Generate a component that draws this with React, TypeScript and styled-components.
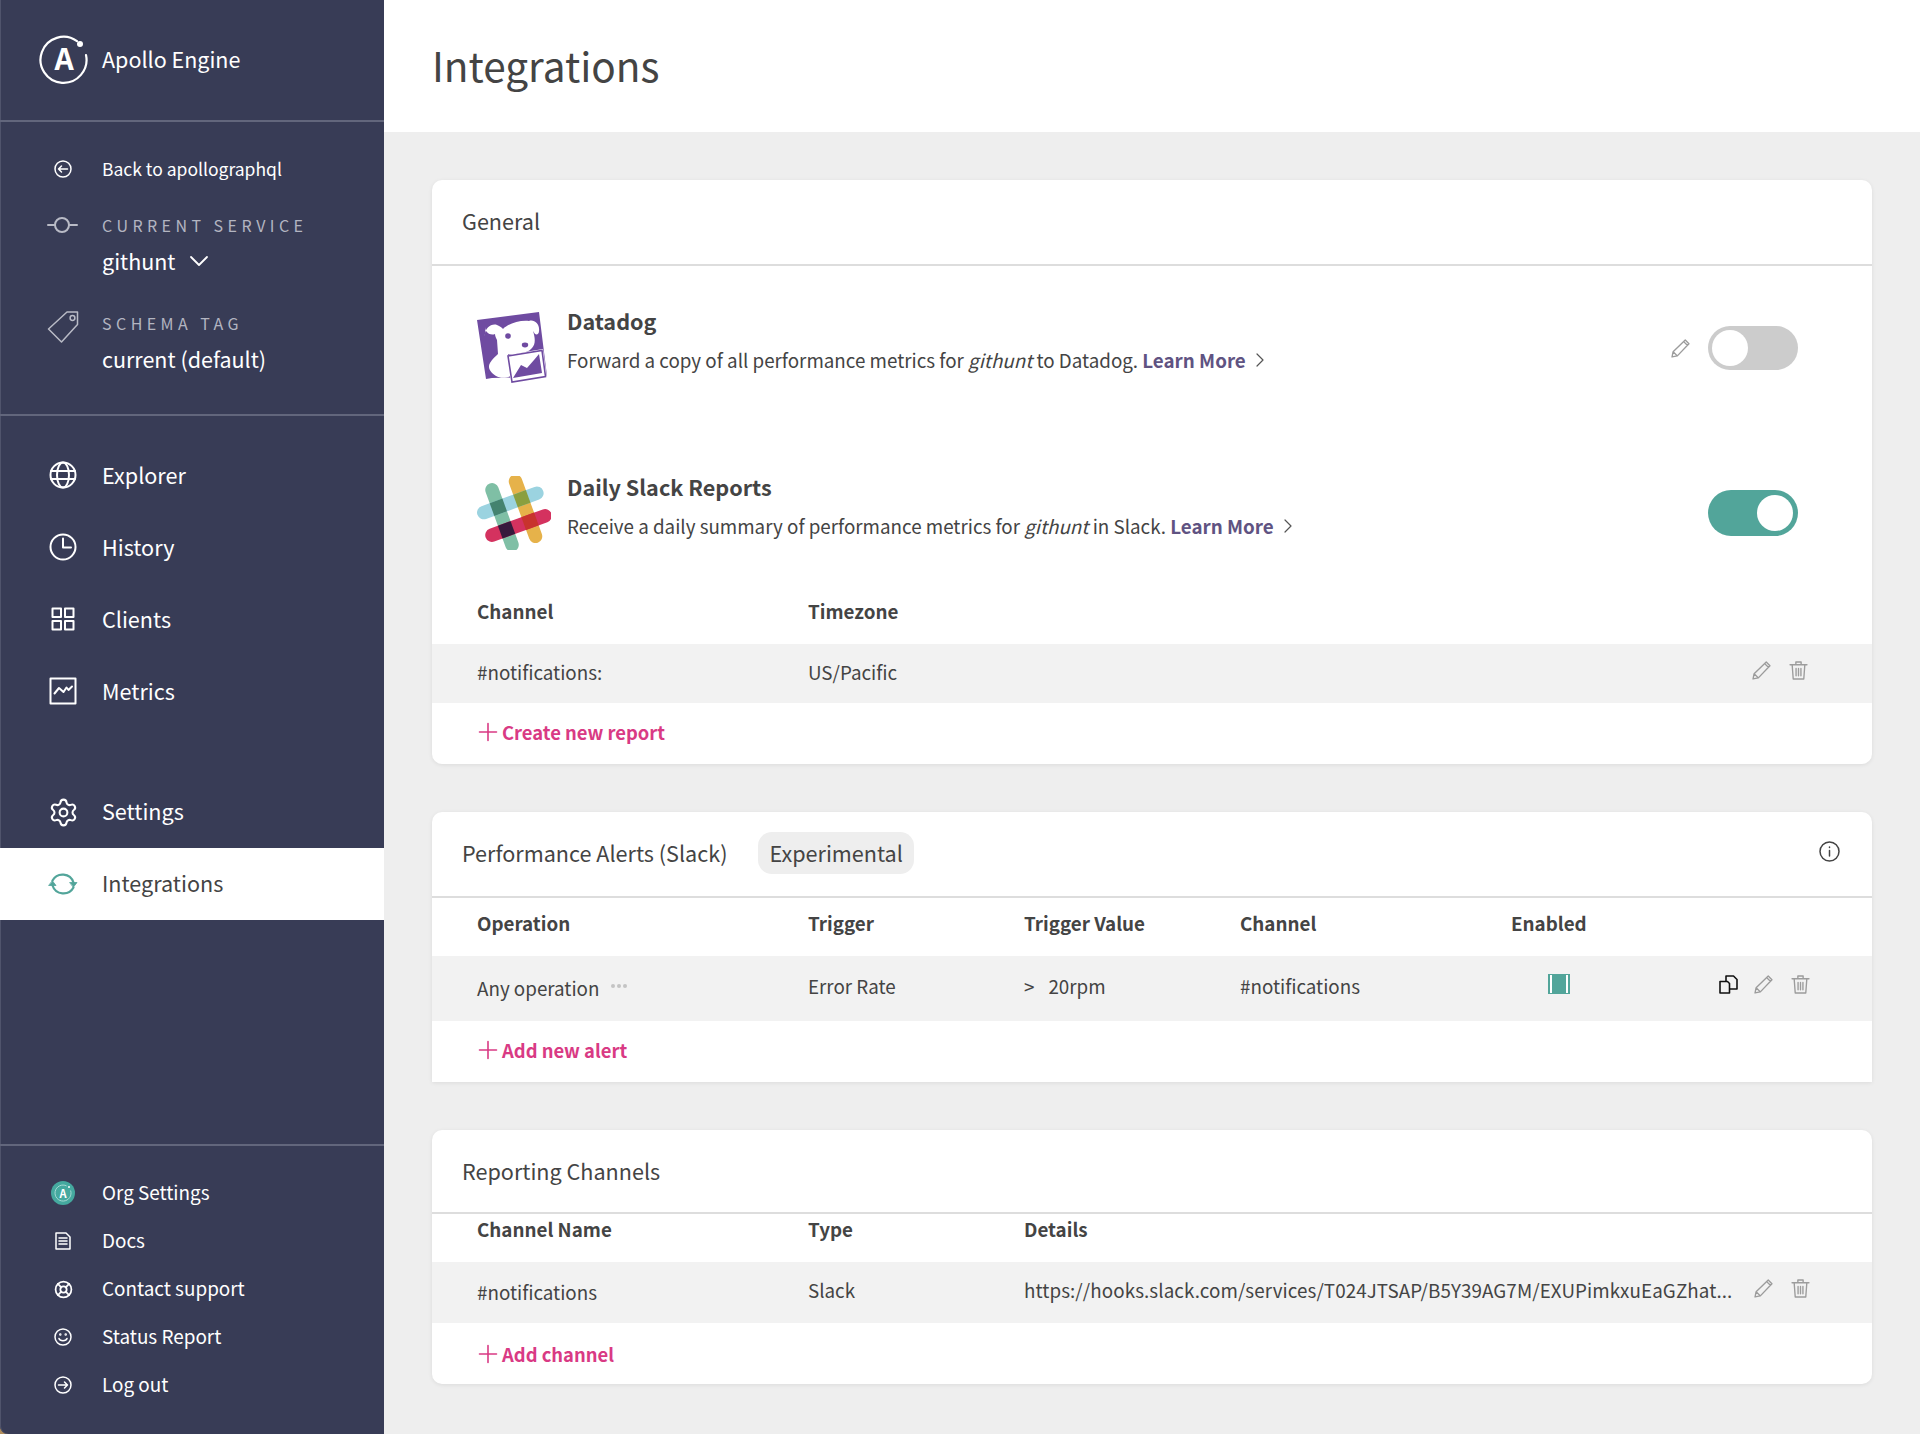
import React from 'react'
import styled, { createGlobalStyle } from 'styled-components'
import { LifeBuoy, Settings } from 'lucide-react'

const sans = `"Noto Sans CJK SC", "Noto Sans", "Liberation Sans", sans-serif`

const GlobalStyle = createGlobalStyle`
  html, body {
    margin: 0;
    padding: 0;
    background: #eeeeee;
    font-family: ${sans};
    color: #444444;
  }
  * { box-sizing: border-box; }
`

const Page = styled.div`
  display: flex;
  width: 1920px;
  height: 1434px;
  overflow: hidden;
  background: #b08d5c;
`

const Sidebar = styled.aside`
  display: flex;
  flex-direction: column;
  width: 384px;
  flex: none;
  background: #383c56;
  color: #ffffff;
  border-radius: 0 0 0 8px;
  box-shadow: inset 1px 0 0 #50546c;
`

const Brand = styled.div`
  display: flex;
  align-items: center;
  height: 122px;
  padding-left: 39px;
  gap: 13px;
  border-bottom: 2px solid #62667c;
  font-size: 21.5px;
  line-height: 28px;
`

const RowText = styled.span`
  margin-top: -2px;
`

const ServiceBlock = styled.div`
  display: flex;
  flex-direction: column;
  padding: 23px 0 40px;
  border-bottom: 2px solid #62667c;
`

const IconSlot = styled.span`
  display: flex;
  align-items: center;
  justify-content: center;
  width: 38px;
  flex: none;
`

const SmallRow = styled.div<{ $size?: number }>`
  display: flex;
  align-items: center;
  height: 48px;
  padding-left: 44px;
  gap: 20px;
  font-size: ${(p) => p.$size ?? 18.9}px;
  line-height: 26px;
`

const ServiceRow = styled.div<{ $top: number }>`
  display: flex;
  align-items: flex-start;
  padding-left: 44px;
  gap: 20px;
  margin-top: ${(p) => p.$top}px;
`

const ServiceText = styled.div`
  display: flex;
  flex-direction: column;
  gap: 9px;
`

const ServiceLabel = styled.div`
  font-size: 16px;
  line-height: 24px;
  letter-spacing: 4.45px;
  color: #b3b5c1;
`

const ServiceValue = styled.div`
  display: flex;
  align-items: center;
  gap: 14px;
  font-size: 21.5px;
  line-height: 30px;
`

const NavGroup = styled.nav<{ $top: number }>`
  display: flex;
  flex-direction: column;
  margin-top: ${(p) => p.$top}px;
`

const NavRow = styled.div<{ $active?: boolean }>`
  display: flex;
  align-items: center;
  height: 72px;
  padding-left: 44px;
  gap: 20px;
  font-size: 21.6px;
  line-height: 30px;
  background: ${(p) => (p.$active ? '#ffffff' : 'transparent')};
  color: ${(p) => (p.$active ? '#444444' : '#ffffff')};
`

const BottomGroup = styled.div`
  display: flex;
  flex-direction: column;
  margin-top: auto;
  padding: 23px 0 25px;
  border-top: 2px solid #62667c;
`

const Main = styled.main`
  display: flex;
  flex-direction: column;
  flex: 1;
  min-width: 0;
  background: #eeeeee;
`

const TopBar = styled.header`
  display: flex;
  align-items: center;
  flex: none;
  height: 132px;
  padding-left: 48px;
  background: #ffffff;
`

const Title = styled.h1`
  margin: -2px 0 0;
  font-size: 40.5px;
  line-height: 52px;
  font-weight: 400;
  color: #444444;
`

const Content = styled.div`
  display: flex;
  flex-direction: column;
  gap: 48px;
  padding: 48px;
`

const Card = styled.section<{ $square?: boolean }>`
  display: flex;
  flex-direction: column;
  flex: none;
  background: #ffffff;
  border-radius: ${(p) => (p.$square ? '10px 10px 0 0' : '10px')};
  box-shadow: 0 1px 4px rgba(0, 0, 0, 0.08);
  overflow: hidden;
`

const CardHead = styled.div<{ $height: number; $lift?: number }>`
  display: flex;
  align-items: center;
  flex: none;
  height: ${(p) => p.$height}px;
  padding: 0 32px ${(p) => p.$lift ?? 0}px 30px;
  border-bottom: 2px solid #dddddd;
  font-size: 21.6px;
  line-height: 30px;
  color: #444444;
`

const Pill = styled.span`
  display: flex;
  align-items: center;
  height: 42px;
  margin-left: 31px;
  padding: 0 11px;
  border-radius: 14px;
  background: #eeeeee;
`

const InfoSlot = styled.span`
  display: flex;
  margin-left: auto;
  margin-top: -4px;
`

const Integration = styled.div<{ $height: number }>`
  display: flex;
  align-items: center;
  flex: none;
  height: ${(p) => p.$height}px;
  padding: 0 74px 0 45px;
`

const LogoSlot = styled.div`
  display: flex;
  align-items: center;
  width: 90px;
  flex: none;
`

const Info = styled.div<{ $lift: number }>`
  display: flex;
  flex-direction: column;
  gap: 11px;
  flex: 1;
  margin-bottom: ${(p) => p.$lift}px;
`

const InfoTitle = styled.div`
  font-size: 21.6px;
  line-height: 28px;
  font-weight: 700;
  color: #444444;
`

const InfoText = styled.div`
  display: flex;
  align-items: center;
  font-size: 18.8px;
  line-height: 28px;
  white-space: pre;
`

const LearnMore = styled.a`
  font-weight: 700;
  color: #5f5382;
  margin-right: 10px;
`

const ToggleWrap = styled.div`
  display: flex;
  align-items: center;
  gap: 18px;
`

const Toggle = styled.div<{ $on?: boolean }>`
  display: flex;
  align-items: center;
  justify-content: ${(p) => (p.$on ? 'flex-end' : 'flex-start')};
  width: 90px;
  height: ${(p) => (p.$on ? 46 : 44)}px;
  padding: 0 ${(p) => (p.$on ? 5 : 4)}px;
  border-radius: 23px;
  background: ${(p) => (p.$on ? '#52a59a' : '#cccccc')};
`

const Knob = styled.span`
  width: 36px;
  height: 36px;
  border-radius: 50%;
  background: #ffffff;
`

const Grid = styled.div<{ $cols: string; $height: number; $shaded?: boolean; $lift?: number }>`
  display: grid;
  flex: none;
  grid-template-columns: ${(p) => p.$cols};
  align-items: center;
  height: ${(p) => p.$height}px;
  padding: 0 62px ${(p) => p.$lift ?? 0}px 45px;
  font-size: 18.8px;
  line-height: 26px;
  background: ${(p) => (p.$shaded ? '#f2f2f2' : 'transparent')};
`

const HeadCell = styled.div`
  font-weight: 700;
  color: #444444;
`

const Cell = styled.div<{ $drop?: number }>`
  display: flex;
  align-items: center;
  white-space: nowrap;
  min-width: 0;
  margin-top: -3px;
  padding-top: ${(p) => p.$drop ?? 0}px;
`

const UrlCell = styled(Cell)`
  letter-spacing: 0.09px;
`

const Dots = styled.span`
  display: flex;
  gap: 2px;
  margin: -5px 0 0 12px;
`

const Dot = styled.i`
  width: 4px;
  height: 4px;
  border-radius: 50%;
  background: #c4c4c4;
`

const Gt = styled.span`
  margin-right: 14px;
`

const Check = styled.div`
  display: flex;
  width: 22px;
  height: 20px;
  margin-left: 37px;
  margin-top: -8px;
  padding: 0 2px;
  border: 1px solid #52a59a;
  border-left-width: 2px;
  border-right-width: 2px;
  background: #ffffff;
`

const CheckFill = styled.span`
  flex: 1;
  background: #52a59a;
`

const Actions = styled.div<{ $nudge?: number }>`
  display: flex;
  align-items: center;
  justify-content: flex-end;
  gap: 18px;
  margin-top: -6px;
  margin-right: ${(p) => p.$nudge ?? 0}px;
`

const AddRow = styled.div<{ $height: number; $lift?: number }>`
  display: flex;
  align-items: center;
  flex: none;
  height: ${(p) => p.$height}px;
  padding: 0 0 ${(p) => p.$lift ?? 0}px 46px;
  gap: 4px;
  font-size: 18.4px;
  line-height: 26px;
  font-weight: 700;
  color: #d93a84;
`

const Stroke = styled.svg`
  display: block;
  flex: none;
  fill: none;
  stroke: currentColor;
  stroke-linecap: round;
  stroke-linejoin: round;
`

const ServiceStroke = styled(Stroke)`
  margin-top: 3px;
`

const Grey = styled.span<{ $color?: string }>`
  display: flex;
  color: ${(p) => p.$color ?? '#9c9c9c'};
`

const CopySlot = styled(Grey)`
  margin-right: -2px;
`

const BadgeText = styled.text`
  font-family: ${sans};
  font-weight: 700;
  text-anchor: middle;
`

const ApolloLogo = () => (
  <svg width="50" height="50" viewBox="0 0 50 50">
    <path d="M47 20A23 23 0 1 1 38 6.200" fill="none" stroke="#fff" strokeWidth="2.200" strokeLinecap="round" />
    <circle cx="41" cy="9" r="3" fill="#fff" />
    <BadgeText x="25" y="35" fontSize="30" fill="#fff">A</BadgeText>
  </svg>
)

const BackIcon = () => (
  <Stroke width="18" height="18" viewBox="0 0 18 18" strokeWidth="1.5">
    <circle cx="9" cy="9" r="8" />
    <path d="M13.5 9h-9M7.5 6 4.5 9l3 3" />
  </Stroke>
)

const ForwardIcon = () => (
  <Stroke width="18" height="18" viewBox="0 0 18 18" strokeWidth="1.5">
    <circle cx="9" cy="9" r="8" />
    <path d="M4.5 9h9M10.500 6l3 3-3 3" />
  </Stroke>
)

const ServiceIcon = () => (
  <ServiceStroke width="32" height="18" viewBox="0 0 32 18" strokeWidth="2" color="#b9bbc6">
    <circle cx="15" cy="9" r="7" />
    <path d="M1 9h7M22 9h8" />
  </ServiceStroke>
)

const TagIcon = () => (
  <Stroke width="32" height="32" viewBox="0 0 32 32" strokeWidth="1.5" color="#b9bbc6">
    <path d="M20 1h10.500v12.500L14.500 31 1.500 18 20 1Z" />
    <circle cx="25.500" cy="7" r="2.400" />
  </Stroke>
)

const Chevron = () => (
  <Stroke width="20" height="12" viewBox="0 0 20 12" strokeWidth="1.8">
    <path d="M2 2l8 8 8-8" />
  </Stroke>
)

const GlobeIcon = () => (
  <Stroke width="28" height="28" viewBox="0 0 28 28" strokeWidth="2">
    <circle cx="14" cy="14" r="12.500" />
    <ellipse cx="14" cy="14" rx="6" ry="12.500" />
    <path d="M2 10h24M2 18h24" />
  </Stroke>
)

const ClockIcon = () => (
  <Stroke width="28" height="28" viewBox="0 0 28 28" strokeWidth="2">
    <circle cx="14" cy="14" r="12.500" />
    <path d="M14 5.500V14.500H22" />
  </Stroke>
)

const ClientsIcon = () => (
  <Stroke width="24" height="24" viewBox="0 0 24 24" strokeWidth="2">
    <rect x="1.500" y="1.500" width="8.500" height="8.500" />
    <rect x="14" y="1.500" width="8.500" height="8.500" />
    <rect x="1.500" y="14" width="8.500" height="8.500" />
    <rect x="14" y="14" width="8.500" height="8.500" />
  </Stroke>
)

const MetricsIcon = () => (
  <Stroke width="28" height="28" viewBox="0 0 28 28" strokeWidth="2">
    <rect x="1.500" y="1.500" width="25" height="25" />
    <path d="M5.500 16.500 10 11l4.500 4 3-4.500 2 2.500 3.500-3.500" />
  </Stroke>
)

const SyncIcon = () => (
  <Stroke width="30" height="26" viewBox="0 0 30 26" strokeWidth="2.200" color="#52a59a">
    <path d="M4.500 9.500A11.500 11.500 0 0 1 25.500 11.500" />
    <path d="M25.500 16.500A11.500 11.500 0 0 1 4.500 14.500" />
    <path d="M22 11.500h7L25.500 16ZM1 14.500h7L4.500 10Z" fill="currentColor" strokeWidth="0.8" />
  </Stroke>
)

const OrgBadge = () => (
  <svg width="24" height="24" viewBox="0 0 24 24">
    <circle cx="12" cy="12" r="12" fill="#45a99f" />
    <path d="M19.600 9.500A8 8 0 1 1 15.600 4.900" fill="none" stroke="#a7dad4" strokeWidth="1" />
    <circle cx="18" cy="6" r="1" fill="#fff" />
    <BadgeText x="12" y="16.500" fontSize="11" fill="#fff">A</BadgeText>
  </svg>
)

const DocIcon = () => (
  <Stroke width="16" height="18" viewBox="0 0 16 18" strokeWidth="1.5">
    <path d="M1 1h10l4 4v12H1V1Z" />
    <path d="M4 6h8M4 9h8M4 12h8" />
  </Stroke>
)

const SmileIcon = () => (
  <Stroke width="18" height="18" viewBox="0 0 18 18" strokeWidth="1.5">
    <circle cx="9" cy="9" r="8" />
    <path d="M5 10.500c1 3 7 3 8 0" />
    <circle cx="6.300" cy="6.600" r="0.500" />
    <circle cx="11.700" cy="6.600" r="0.500" />
  </Stroke>
)

const PencilIcon = () => (
  <Stroke width="19" height="19" viewBox="0 0 18 18" strokeWidth="1.300">
    <path d="M1 17l1-5L13.500 1 17 4.500 6 16l-5 1ZM2 12l4 4M12 2.500 15.500 6" />
  </Stroke>
)

const TrashIcon = () => (
  <Stroke width="19" height="19" viewBox="0 0 18 18" strokeWidth="1.300">
    <path d="M1 3.500h16M3 3.500 4 17h10l1-13.500M6.500 3.500V1h5v2.500M6.700 7v7M9 7v7M11.300 7v7" />
  </Stroke>
)

const CopyIcon = () => (
  <Stroke width="19" height="19" viewBox="0 0 19 19" strokeWidth="1.600" color="#111">
    <path d="M1 6.500h7.500l2 2V18H1V6.500Z" />
    <path d="M7 6V1h7.500l3.500 3.500V14h-7" />
  </Stroke>
)

const InfoIcon = () => (
  <Stroke width="21" height="21" viewBox="0 0 21 21" strokeWidth="1.500" color="#444">
    <circle cx="10.500" cy="10.500" r="9.500" />
    <path d="M10.500 9.500v5.500M10.500 6v.5" />
  </Stroke>
)

const PlusIcon = () => (
  <Stroke width="20" height="20" viewBox="0 0 20 20" strokeWidth="1.600">
    <path d="M10 1.500v17M1.500 10h17" />
  </Stroke>
)

const SmallChevron = () => (
  <Stroke width="8" height="14" viewBox="0 0 8 14" strokeWidth="1.200" color="#555">
    <path d="M1 1l6 6-6 6" />
  </Stroke>
)

const DatadogLogo = () => (
  <svg width="70" height="73" viewBox="0 0 70 73">
    <path d="M0 8 62 0l8 64-8 1-47 1-6 1Z" fill="#6f4ba1" />
    <path d="M8 24c-1-7 6-13 12-11 3 1 5 3 6 4 5-5 16-9 26-8 5-2 11 3 10 10 0 3-2 4-4 3l-2-3c2 6 3 13-1 17-3 4-9 5-13 5l-3 1h-8l4 21c-4 3-11 4-16 1-5-3-9-8-6-13 2-4 6-7 8-9l-1-14c-1-2-2-4-2-6-5 2-10-2-10-7Z" fill="#fff" />
    <circle cx="31" cy="24" r="2.800" fill="#6f4ba1" />
    <ellipse cx="48" cy="33" rx="3.200" ry="2.400" fill="#6f4ba1" />
    <path d="M30 43 66 37l4 29-36 6-4-29Z" fill="#fff" />
    <path d="M31 44 65 38.500l3.500 26-33.500 5.500-4-26Z" fill="none" stroke="#6f4ba1" strokeWidth="1.600" />
    <path d="M36 66l8-13 6 3 7-8 5-6 3 19-29 5Z" fill="#6f4ba1" />
  </svg>
)

const SlackLogo = () => (
  <svg width="74" height="74" viewBox="0 0 74 74">
    <g transform="rotate(-20 37 37)">
      <rect x="17.500" y="1" width="13.500" height="72" rx="6.750" fill="#7fbfa5" />
      <rect x="42.500" y="1" width="13.500" height="72" rx="6.750" fill="#e6b24a" />
      <rect x="2" y="19.500" width="70" height="13.500" rx="6.750" fill="#9bd3e0" />
      <rect x="2" y="43.500" width="70" height="13.500" rx="6.750" fill="#d4325f" />
      <rect x="17.500" y="19.500" width="13.500" height="13.500" fill="#44836f" />
      <rect x="42.500" y="19.500" width="13.500" height="13.500" fill="#8a9f3f" />
      <rect x="17.500" y="43.500" width="13.500" height="13.500" fill="#371a3c" />
      <rect x="42.500" y="43.500" width="13.500" height="13.500" fill="#c8332d" />
    </g>
  </svg>
)

const alertCols = '331px 216px 216px 271px 1fr 130px'
const channelCols = '331px 216px 1fr 77px'
const reportCols = '331px 1fr 110px'

export default function App() {
  return (
    <>
      <GlobalStyle />
      <Page>
        <Sidebar>
          <Brand>
            <ApolloLogo />
            <RowText>Apollo Engine</RowText>
          </Brand>
          <ServiceBlock>
            <SmallRow $size={17.5}>
              <IconSlot><BackIcon /></IconSlot>
              Back to apollographql
            </SmallRow>
            <ServiceRow $top={20}>
              <IconSlot><ServiceIcon /></IconSlot>
              <ServiceText>
                <ServiceLabel>CURRENT SERVICE</ServiceLabel>
                <ServiceValue>githunt <Chevron /></ServiceValue>
              </ServiceText>
            </ServiceRow>
            <ServiceRow $top={35}>
              <IconSlot><TagIcon /></IconSlot>
              <ServiceText>
                <ServiceLabel>SCHEMA TAG</ServiceLabel>
                <ServiceValue>current (default)</ServiceValue>
              </ServiceText>
            </ServiceRow>
          </ServiceBlock>
          <NavGroup $top={23}>
            <NavRow><IconSlot><GlobeIcon /></IconSlot>Explorer</NavRow>
            <NavRow><IconSlot><ClockIcon /></IconSlot>History</NavRow>
            <NavRow><IconSlot><ClientsIcon /></IconSlot>Clients</NavRow>
            <NavRow><IconSlot><MetricsIcon /></IconSlot>Metrics</NavRow>
          </NavGroup>
          <NavGroup $top={49}>
            <NavRow><IconSlot><Settings size={31} strokeWidth={1.6} /></IconSlot><RowText>Settings</RowText></NavRow>
            <NavRow $active><IconSlot><SyncIcon /></IconSlot><RowText>Integrations</RowText></NavRow>
          </NavGroup>
          <BottomGroup>
            <SmallRow><IconSlot><OrgBadge /></IconSlot><RowText>Org Settings</RowText></SmallRow>
            <SmallRow><IconSlot><DocIcon /></IconSlot><RowText>Docs</RowText></SmallRow>
            <SmallRow><IconSlot><LifeBuoy size={19} strokeWidth={2.2} /></IconSlot><RowText>Contact support</RowText></SmallRow>
            <SmallRow><IconSlot><SmileIcon /></IconSlot><RowText>Status Report</RowText></SmallRow>
            <SmallRow><IconSlot><ForwardIcon /></IconSlot><RowText>Log out</RowText></SmallRow>
          </BottomGroup>
        </Sidebar>
        <Main>
          <TopBar>
            <Title>Integrations</Title>
          </TopBar>
          <Content>
            <Card>
              <CardHead $height={86} $lift={2}>General</CardHead>
              <Integration $height={164}>
                <LogoSlot><DatadogLogo /></LogoSlot>
                <Info $lift={15}>
                  <InfoTitle>Datadog</InfoTitle>
                  <InfoText>
                    Forward a copy of all performance metrics for <em>githunt</em> to Datadog. <LearnMore>Learn More</LearnMore><SmallChevron />
                  </InfoText>
                </Info>
                <ToggleWrap>
                  <Grey><PencilIcon /></Grey>
                  <Toggle><Knob /></Toggle>
                </ToggleWrap>
              </Integration>
              <Integration $height={165}>
                <LogoSlot><SlackLogo /></LogoSlot>
                <Info $lift={13}>
                  <InfoTitle>Daily Slack Reports</InfoTitle>
                  <InfoText>
                    Receive a daily summary of performance metrics for <em>githunt</em> in Slack. <LearnMore>Learn More</LearnMore><SmallChevron />
                  </InfoText>
                </Info>
                <Toggle $on><Knob /></Toggle>
              </Integration>
              <Grid $cols={reportCols} $height={49} $lift={18}>
                <HeadCell>Channel</HeadCell>
                <HeadCell>Timezone</HeadCell>
              </Grid>
              <Grid $cols={reportCols} $height={59} $shaded>
                <Cell>#notifications:</Cell>
                <Cell>US/Pacific</Cell>
                <Actions $nudge={2}>
                  <Grey><PencilIcon /></Grey>
                  <Grey><TrashIcon /></Grey>
                </Actions>
              </Grid>
              <AddRow $height={61} $lift={3}><PlusIcon />Create new report</AddRow>
            </Card>

            <Card $square>
              <CardHead $height={86} $lift={2}>
                Performance Alerts (Slack)
                <Pill>Experimental</Pill>
                <InfoSlot><InfoIcon /></InfoSlot>
              </CardHead>
              <Grid $cols={alertCols} $height={58} $lift={9}>
                <HeadCell>Operation</HeadCell>
                <HeadCell>Trigger</HeadCell>
                <HeadCell>Trigger Value</HeadCell>
                <HeadCell>Channel</HeadCell>
                <HeadCell>Enabled</HeadCell>
              </Grid>
              <Grid $cols={alertCols} $height={65} $shaded $lift={2}>
                <Cell $drop={4}>Any operation<Dots><Dot /><Dot /><Dot /></Dots></Cell>
                <Cell>Error Rate</Cell>
                <Cell><Gt>&gt;</Gt>20rpm</Cell>
                <Cell>#notifications</Cell>
                <Check><CheckFill /></Check>
                <Actions>
                  <CopySlot $color="#111"><CopyIcon /></CopySlot>
                  <Grey><PencilIcon /></Grey>
                  <Grey><TrashIcon /></Grey>
                </Actions>
              </Grid>
              <AddRow $height={61} $lift={4}><PlusIcon />Add new alert</AddRow>
            </Card>

            <Card>
              <CardHead $height={84}>Reporting Channels</CardHead>
              <Grid $cols={channelCols} $height={48} $lift={19}>
                <HeadCell>Channel Name</HeadCell>
                <HeadCell>Type</HeadCell>
                <HeadCell>Details</HeadCell>
              </Grid>
              <Grid $cols={channelCols} $height={61} $shaded $lift={2}>
                <Cell $drop={4}>#notifications</Cell>
                <Cell>Slack</Cell>
                <UrlCell>https://hooks.slack.com/services/T024JTSAP/B5Y39AG7M/EXUPimkxuEaGZhat...</UrlCell>
                <Actions>
                  <Grey><PencilIcon /></Grey>
                  <Grey><TrashIcon /></Grey>
                </Actions>
              </Grid>
              <AddRow $height={61}><PlusIcon />Add channel</AddRow>
            </Card>
          </Content>
        </Main>
      </Page>
    </>
  )
}
